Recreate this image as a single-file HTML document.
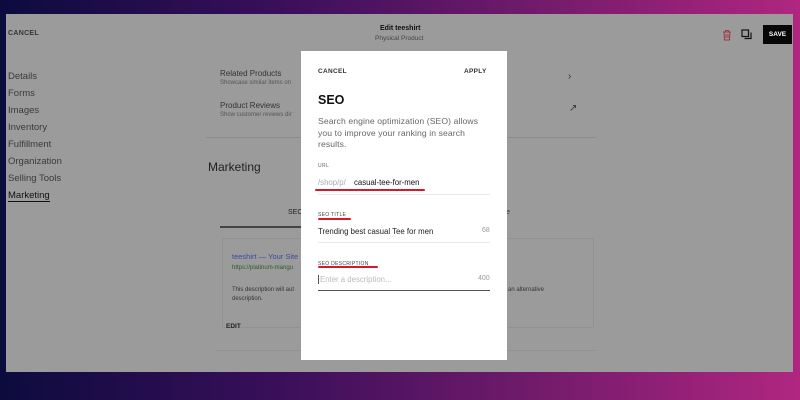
<!DOCTYPE html>
<html><head><style>
*{margin:0;padding:0;box-sizing:border-box}
body{width:800px;height:400px;overflow:hidden;position:relative;font-family:"Liberation Sans",sans-serif;background:linear-gradient(90deg,#0c0b3e 0%,#3a0f5a 35%,#6e1a6a 65%,#b02680 100%)}
#panel{position:absolute;left:6px;top:14px;width:787px;height:358px;background:#9b9b9b;color:#333}
.a{position:absolute;white-space:nowrap}
#modal{position:absolute;left:301px;top:51px;width:206px;height:309px;background:#fff}
.red{position:absolute;height:2px;background:#d21a2a;border-radius:1px}
</style></head><body>
<div id="panel">
<div class="a" style="left:2px;top:16px;font-size:7px;font-weight:bold;color:#333;letter-spacing:.3px">CANCEL</div>
<div class="a" style="left:374px;top:11px;font-size:7px;font-weight:bold;color:#111">Edit teeshirt</div>
<div class="a" style="left:369px;top:21px;font-size:6.5px;color:#444">Physical Product</div>
<svg class="a" style="left:716px;top:15px" width="10" height="12" viewBox="0 0 10 12"><path d="M1 3h8M3.5 3V1.5h3V3M2 3l.6 8h4.8L8 3M4 5v4M6 5v4" fill="none" stroke="#9a3a44" stroke-width="1"/></svg>
<svg class="a" style="left:735px;top:15px" width="11" height="11" viewBox="0 0 11 11"><rect x="1" y="1" width="6.5" height="6.5" fill="none" stroke="#111" stroke-width="1.2"/><path d="M3.5 9.5h6.5V3.5" fill="none" stroke="#111" stroke-width="1.2"/></svg>
<div class="a" style="left:757px;top:11px;width:29px;height:19px;background:#070707;color:#fff;font-size:6.5px;font-weight:bold;text-align:center;line-height:19px">SAVE</div>
<div style="position:absolute;left:2px;top:54px;font-size:9.5px;color:#3a3a3a;line-height:17px">Details<br>Forms<br>Images<br>Inventory<br>Fulfillment<br>Organization<br>Selling Tools<br><span style="color:#111;border-bottom:1px solid #111">Marketing</span></div>
<div class="a" style="left:214px;top:55px;font-size:8px;color:#333">Related Products</div>
<div class="a" style="left:214px;top:66px;font-size:6px;color:#555">Showcase similar items on</div>
<div class="a" style="left:562px;top:57px;font-size:10px;color:#333">›</div>
<div class="a" style="left:214px;top:87px;font-size:8px;color:#333">Product Reviews</div>
<div class="a" style="left:214px;top:98px;font-size:6px;color:#555">Show customer reviews dir</div>
<div class="a" style="left:563px;top:89px;font-size:10px;color:#333">↗</div>
<div class="a" style="left:200px;top:123px;width:390px;height:1px;background:#8c8c8c"></div>
<div class="a" style="left:202px;top:146px;font-size:12px;color:#222">Marketing</div>
<div class="a" style="left:282px;top:195px;font-size:7px;color:#222">SEO</div>
<div class="a" style="left:500px;top:195px;font-size:7px;color:#333">e</div>
<div class="a" style="left:214px;top:212px;width:82px;height:2px;background:#444"></div>
<div class="a" style="left:216px;top:224px;width:372px;height:90px;border:1px solid #929292"></div>
<div class="a" style="left:226px;top:238px;font-size:7.5px;color:#3a4a9a">teeshirt — Your Site</div>
<div class="a" style="left:226px;top:251px;font-size:6px;color:#2a5a2a">https://platinum-mangu</div>
<div class="a" style="left:226px;top:273px;font-size:6px;color:#333">This description will aut</div>
<div class="a" style="left:226px;top:282px;font-size:6px;color:#333">description.</div>
<div class="a" style="left:502px;top:273px;font-size:6px;color:#333">an alternative</div>
<div class="a" style="left:220px;top:309px;font-size:6.5px;color:#222;font-weight:bold">EDIT</div>
<div class="a" style="left:210px;top:336px;width:380px;height:1px;background:#929292"></div>
</div>
<div id="modal">
<div class="a" style="left:17px;top:17px;font-size:6.5px;font-weight:bold;color:#333;letter-spacing:.3px">CANCEL</div>
<div class="a" style="left:163px;top:17px;font-size:6.5px;font-weight:bold;color:#333;letter-spacing:.3px">APPLY</div>
<div class="a" style="left:17px;top:42px;font-size:12.5px;font-weight:bold;color:#111">SEO</div>
<div style="position:absolute;left:17px;top:65px;width:172px;font-size:8.6px;color:#666;line-height:11.5px;letter-spacing:.1px">Search engine optimization (SEO) allows you to improve your ranking in search results.</div>
<div class="a" style="left:17px;top:112px;font-size:5px;color:#666;letter-spacing:.4px">URL</div>
<div class="a" style="left:17px;top:127px;font-size:7.8px;color:#aaa">/shop/p/</div>
<div class="a" style="left:53px;top:127px;font-size:7.8px;color:#111">casual-tee-for-men</div>
<div class="red" style="left:14px;top:138px;width:110px"></div>
<div class="a" style="left:17px;top:143px;width:172px;height:1px;background:#e8e8e8"></div>
<div class="a" style="left:17px;top:161px;font-size:5px;color:#444;letter-spacing:.3px">SEO TITLE</div>
<div class="red" style="left:17px;top:167px;width:33px"></div>
<div class="a" style="left:17px;top:176px;font-size:7.8px;color:#222">Trending best casual Tee for men</div>
<div class="a" style="left:181px;top:176px;font-size:7px;color:#999">68</div>
<div class="a" style="left:17px;top:191px;width:172px;height:1px;background:#e8e8e8"></div>
<div class="a" style="left:17px;top:210px;font-size:5px;color:#444;letter-spacing:.3px">SEO DESCRIPTION</div>
<div class="red" style="left:17px;top:215px;width:60px"></div>
<div class="a" style="left:17px;top:224px;font-size:7.8px;color:#bbb;border-left:1px solid #555;padding-left:1px">Enter a description...</div>
<div class="a" style="left:177px;top:224px;font-size:7px;color:#999">400</div>
<div class="a" style="left:17px;top:239px;width:172px;height:1px;background:#555"></div>
</div>
</body></html>
